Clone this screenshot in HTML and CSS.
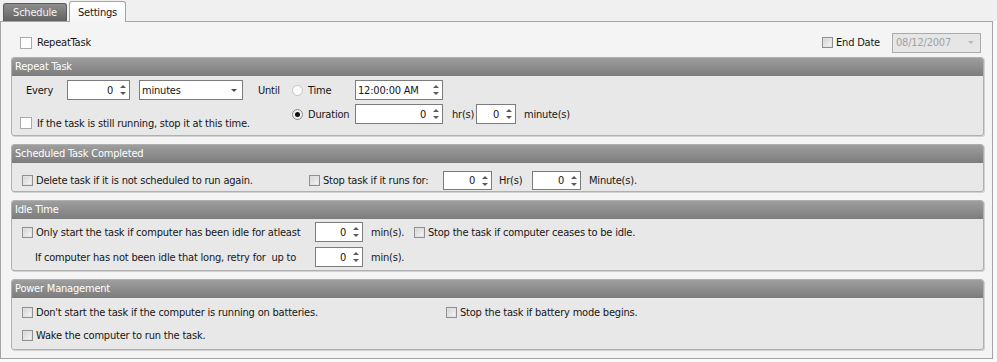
FILE: index.html
```html
<!DOCTYPE html>
<html lang="en">
<head>
    <meta charset="UTF-8">
    <title>Task Settings</title>
    <link rel="stylesheet" href="styles.css">
</head>
<body>
    <div class="tabs">
        <div class="tab">Schedule</div>
        <div class="tab active">Settings</div>
    </div>

    <div class="panel">
        <div class="top-row">
            <label class="check big"><span class="cb plain"></span>RepeatTask</label>
            <div class="end-date">
                <label class="check"><span class="cb"></span>End Date</label>
                <div class="date-box"><span>08/12/2007</span><span class="caret light"></span></div>
            </div>
        </div>

        <section class="group">
            <h2>Repeat Task</h2>
            <div class="body repeat">
                <div class="repeat-left">
                    <div class="row h20">
                        <span class="every">Every</span>
                        <div class="spin w63"><span class="val">0</span><span class="arrows"><i class="up"></i><i class="dn"></i></span></div>
                        <div class="combo"><span>minutes</span><span class="caret"></span></div>
                        <span class="until">Until</span>
                    </div>
                    <label class="check still"><span class="cb plain"></span>If the task is still running, stop it at this time.</label>
                </div>
                <div class="repeat-right">
                    <div class="row h20">
                        <label class="radio"><span class="rb"></span>Time</label>
                        <div class="spin w88"><span class="val left">12:00:00 AM</span><span class="arrows"><i class="up"></i><i class="dn"></i></span></div>
                    </div>
                    <div class="row h20 second">
                        <label class="radio"><span class="rb on"></span>Duration</label>
                        <div class="spin w88"><span class="val">0</span><span class="arrows"><i class="up"></i><i class="dn"></i></span></div>
                        <span class="unit hr">hr(s)</span>
                        <div class="spin w40"><span class="val">0</span><span class="arrows"><i class="up"></i><i class="dn"></i></span></div>
                        <span class="unit after">minute(s)</span>
                    </div>
                </div>
            </div>
        </section>

        <section class="group">
            <h2>Scheduled Task Completed</h2>
            <div class="body completed">
                <div class="row h19">
                    <label class="check w287"><span class="cb"></span>Delete task if it is not scheduled to run again.</label>
                    <label class="check w134"><span class="cb"></span>Stop task if it runs for:</label>
                    <div class="spin w49 h19"><span class="val">0</span><span class="arrows"><i class="up"></i><i class="dn"></i></span></div>
                    <span class="unit hrs">Hr(s)</span>
                    <div class="spin w49 h19"><span class="val">0</span><span class="arrows"><i class="up"></i><i class="dn"></i></span></div>
                    <span class="unit after">Minute(s).</span>
                </div>
            </div>
        </section>

        <section class="group">
            <h2>Idle Time</h2>
            <div class="body idle">
                <div class="row h20">
                    <label class="check w293"><span class="cb"></span>Only start the task if computer has been idle for atleast</label>
                    <div class="spin w48"><span class="val">0</span><span class="arrows"><i class="up"></i><i class="dn"></i></span></div>
                    <span class="unit mins">min(s).</span>
                    <label class="check"><span class="cb"></span>Stop the task if computer ceases to be idle.</label>
                </div>
                <div class="row h20 second">
                    <span class="retry">If computer has not been idle that long, retry for&nbsp; up to</span>
                    <div class="spin w48"><span class="val">0</span><span class="arrows"><i class="up"></i><i class="dn"></i></span></div>
                    <span class="unit mins">min(s).</span>
                </div>
            </div>
        </section>

        <section class="group">
            <h2>Power Management</h2>
            <div class="body power">
                <div class="row h16">
                    <label class="check w424"><span class="cb"></span>Don't start the task if the computer is running on batteries.</label>
                    <label class="check"><span class="cb"></span>Stop the task if battery mode begins.</label>
                </div>
                <div class="row h16 second">
                    <label class="check"><span class="cb"></span>Wake the computer to run the task.</label>
                </div>
            </div>
        </section>
    </div>
</body>
</html>
```

FILE: styles.css
```css
* {
    box-sizing: border-box;
    margin: 0;
    padding: 0;
}

body {
    font-family: "DejaVu Sans Condensed", "DejaVu Sans", sans-serif;
    font-stretch: condensed;
    font-size: 11px;
    letter-spacing: -0.2px;
    color: #161616;
    background: #fafafa;
    width: 997px;
    height: 362px;
    overflow: hidden;
}

/* tabs */
.tabs {
    display: flex;
    align-items: flex-end;
    height: 21px;
    padding-left: 3px;
    gap: 2px;
    background: #f0f0f0;
}

.tab {
    height: 18px;
    width: 64px;
    display: flex;
    align-items: center;
    justify-content: center;
    border: 1px solid #5a5a5a;
    border-bottom: none;
    border-radius: 3px 3px 0 0;
    background: linear-gradient(#8e8e8e, #626262);
    color: #f2f2f2;
}

.tab.active {
    position: relative;
    z-index: 1;
    height: 21px;
    width: 57px;
    margin-bottom: -1px;
    border-color: #a4a4a4;
    background: linear-gradient(#ffffff, #f6f6f6);
    color: #161616;
}

/* panel */
.panel {
    width: 993px;
    height: 338px;
    border: 1px solid #a4a4a4;
    background: #f4f4f4;
}

.top-row {
    display: flex;
    align-items: center;
    justify-content: space-between;
    height: 35px;
    padding: 6px 11px 0 19px;
}

.end-date {
    display: flex;
    align-items: center;
}

.end-date .check {
    width: 70px;
}

.date-box {
    display: flex;
    align-items: center;
    justify-content: space-between;
    width: 89px;
    height: 20px;
    padding: 0 6px 0 3px;
    border: 1px solid #ababab;
    background: #e6e6e6;
    color: #a2a2a2;
}

/* group boxes */
.group {
    margin: 0 8px 8px 10px;
    border: 1px solid #b0b0b0;
    border-radius: 3px;
    background: #e8e8e8;
    box-shadow: 1px 1px 0 #d2d2d2;
}

.group h2 {
    height: 18px;
    padding-left: 3px;
    font-size: 11px;
    font-weight: normal;
    line-height: 18px;
    color: #fff;
    background: linear-gradient(#9e9e9e, #7c7c7c);
    border-radius: 2px 2px 0 0;
}

.body {
    padding-left: 10px;
}

.row {
    display: flex;
    align-items: center;
}

.row > * {
    flex: none;
}

.h16 { height: 16px; }
.h19 { height: 19px; }
.h20 { height: 20px; }

.repeat {
    display: flex;
    height: 59px;
    padding: 4px 0 0 8px;
}

.repeat-left {
    width: 272px;
}

.repeat .second {
    margin-top: 4px;
}

.every {
    width: 41px;
    margin-left: 6px;
}

.combo {
    display: flex;
    align-items: center;
    justify-content: space-between;
    width: 104px;
    height: 20px;
    margin-left: 9px;
    padding: 0 5px 0 2px;
    border: 1px solid #7c7c7c;
    background: #fff;
}

.until {
    margin-left: 15px;
}

.still {
    height: 16px;
    margin-top: 15px;
}

.completed {
    height: 28px;
    padding-top: 8px;
}

.idle {
    height: 51px;
    padding-top: 3px;
}

.idle .second {
    margin-top: 5px;
}

.retry {
    width: 280px;
    margin-left: 13px;
}

.power {
    height: 51px;
    padding-top: 6px;
}

.power .second {
    margin-top: 7px;
}

/* checkboxes and radios */
.check {
    display: flex;
    align-items: center;
    white-space: nowrap;
}

.w134 { width: 134px; }
.w287 { width: 287px; }
.w293 { width: 293px; }
.w424 { width: 424px; }

.cb {
    flex: none;
    width: 11px;
    height: 11px;
    margin-right: 3px;
    border: 1px solid #8f8f8f;
    background: linear-gradient(135deg, #d2d2d2, #f8f8f8);
    box-shadow: inset 0 0 0 1px #e2e2e2;
}

.cb.plain {
    width: 12px;
    height: 12px;
    margin-right: 5px;
    border-color: #a9a9a9;
    background: #fdfdfd;
    box-shadow: none;
}

.radio {
    display: flex;
    align-items: center;
    width: 63px;
}

.rb {
    position: relative;
    flex: none;
    width: 11px;
    height: 11px;
    margin-right: 5px;
    border: 1px solid #c4c4c4;
    border-radius: 50%;
    background: #fbfbfb;
}

.rb.on {
    border-color: #8a8a8a;
    background: #f2f2f2;
}

.rb.on::after {
    content: "";
    position: absolute;
    left: 2px;
    top: 2px;
    width: 5px;
    height: 5px;
    border-radius: 50%;
    background: #111;
}

/* spinners */
.spin {
    display: flex;
    align-items: center;
    height: 20px;
    border: 1px solid #7c7c7c;
    background: #fff;
}

.spin.h19 { height: 19px; }

.w40 { width: 40px; }
.w48 { width: 48px; }
.w49 { width: 49px; }
.w63 { width: 63px; }
.w88 { width: 88px; }

.val {
    flex: 1;
    text-align: right;
    padding-right: 6px;
}

.val.left {
    text-align: left;
    padding-left: 2px;
}

.arrows {
    display: flex;
    flex-direction: column;
    align-items: center;
    gap: 4px;
    width: 7px;
    margin-right: 3px;
}

.arrows i {
    width: 0;
    height: 0;
    border-left: 3px solid transparent;
    border-right: 3px solid transparent;
}

.arrows .up { border-bottom: 3px solid #5a5a5a; }
.arrows .dn { border-top: 3px solid #5a5a5a; }

.caret {
    width: 0;
    height: 0;
    border-left: 3px solid transparent;
    border-right: 3px solid transparent;
    border-top: 3px solid #4a4a4a;
}

.caret.light {
    border-top-color: #b8b8b8;
}

.unit.hr {
    width: 24px;
    margin-left: 9px;
}

.unit.hrs {
    width: 33px;
    margin-left: 7px;
}

.unit.mins {
    width: 43px;
    margin-left: 8px;
}

.unit.after {
    margin-left: 8px;
}
```
